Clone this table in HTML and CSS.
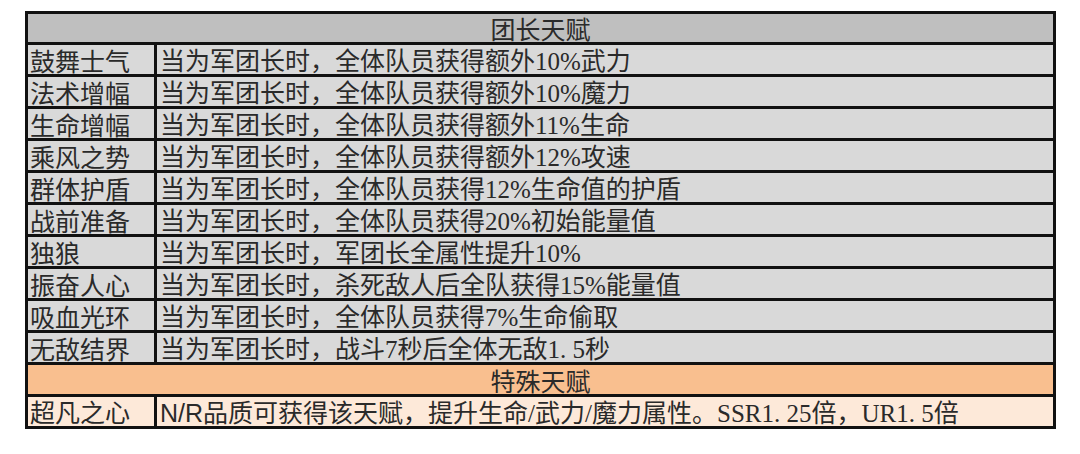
FILE: index.html
```html
<!DOCTYPE html>
<html lang="zh-CN">
<head>
<meta charset="utf-8">
<title>团长天赋</title>
<link rel="stylesheet" href="styles.css">
</head>
<body>
<table class="talents">
  <colgroup><col class="c-name"><col class="c-desc"></colgroup>
  <tr class="head gray"><td colspan="2">团长天赋</td></tr>
  <tr class="row"><td>鼓舞士气</td><td class="desc">当为军团长时，全体队员获得额外<span class="hw">10%</span>武力</td></tr>
  <tr class="row"><td>法术增幅</td><td class="desc">当为军团长时，全体队员获得额外<span class="hw">10%</span>魔力</td></tr>
  <tr class="row"><td>生命增幅</td><td class="desc">当为军团长时，全体队员获得额外<span class="hw">11%</span>生命</td></tr>
  <tr class="row"><td>乘风之势</td><td class="desc">当为军团长时，全体队员获得额外<span class="hw">12%</span>攻速</td></tr>
  <tr class="row"><td>群体护盾</td><td class="desc">当为军团长时，全体队员获得<span class="hw">12%</span>生命值的护盾</td></tr>
  <tr class="row"><td>战前准备</td><td class="desc">当为军团长时，全体队员获得<span class="hw">20%</span>初始能量值</td></tr>
  <tr class="row"><td>独狼</td><td class="desc">当为军团长时，军团长全属性提升<span class="hw">10%</span></td></tr>
  <tr class="row"><td>振奋人心</td><td class="desc">当为军团长时，杀死敌人后全队获得<span class="hw">15%</span>能量值</td></tr>
  <tr class="row"><td>吸血光环</td><td class="desc">当为军团长时，全体队员获得<span class="hw">7%</span>生命偷取</td></tr>
  <tr class="row"><td>无敌结界</td><td class="desc">当为军团长时，战斗<span class="hw">7</span>秒后全体无敌<span class="hw">1. 5</span>秒</td></tr>
  <tr class="head orange"><td colspan="2">特殊天赋</td></tr>
  <tr class="row peach"><td>超凡之心</td><td class="desc"><span class="sans">N/R</span>品质可获得该天赋，提升生命<span class="hw">/</span>武力<span class="hw">/</span>魔力属性。<span class="hw">SSR1. 25</span>倍，<span class="hw">UR1. 5</span>倍</td></tr>
</table>
</body>
</html>
```
FILE: styles.css
```css
html, body {
  margin: 0;
  padding: 0;
  background: #ffffff;
}
body {
  padding: 11px 0 0 25px;
}
.talents {
  border-collapse: collapse;
  width: 1031px;
  table-layout: fixed;
  font-family: "Noto Sans CJK SC", sans-serif;
  font-size: 25px;
  color: #2a2a2a;
}
.c-name { width: 129px; }
.talents td {
  border: 3px solid #111111;
  height: 28.4px;
  padding: 0 0 0 2px;
  line-height: 28px;
  white-space: nowrap;
}
.talents td.desc { padding-left: 3px; }
.row td { background: #d9d9d9; }
.head td {
  text-align: center;
  padding: 0;
}
.gray td { background: #bfbfbf; }
.orange td { background: #f9bf8f; }
.peach td { background: #fde9d9; }
.sans {
  font-family: "Liberation Sans", "Noto Sans CJK SC", sans-serif;
  line-height: 1;
}
.hw {
  font-family: "Liberation Serif", serif;
  line-height: 1;
}
```
